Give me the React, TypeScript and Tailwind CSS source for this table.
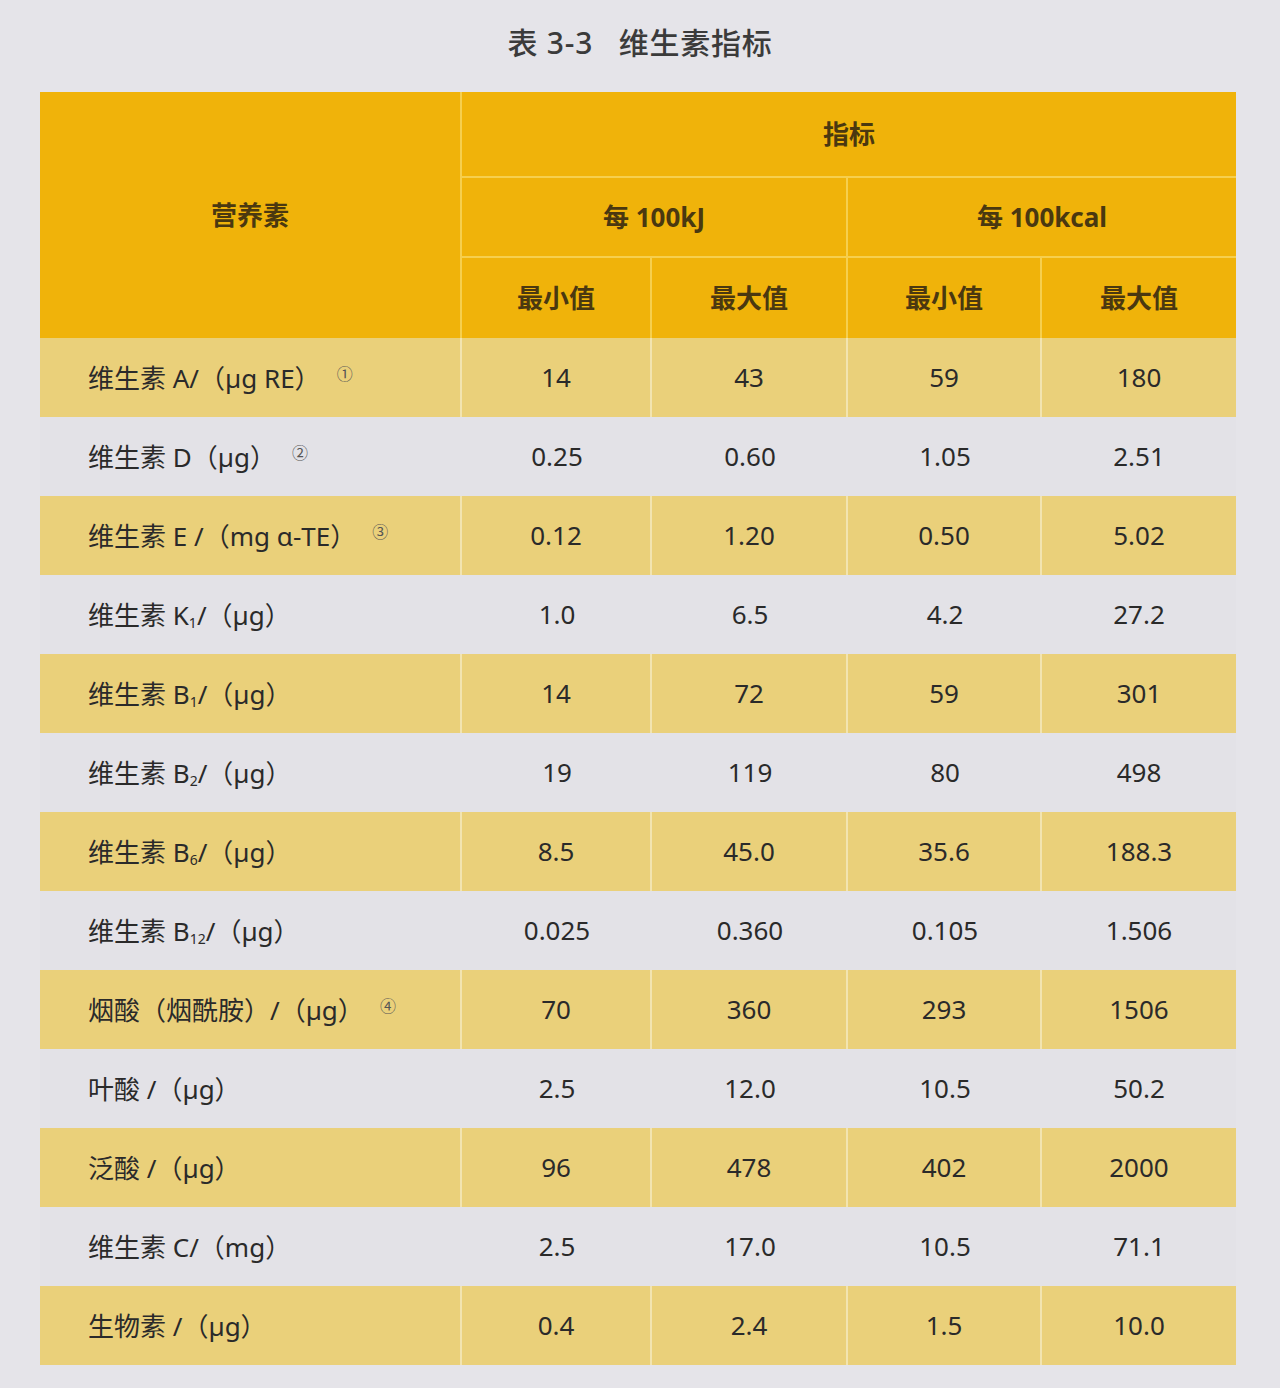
import React from 'react';

interface Row {
  label: React.ReactNode;
  values: string[];
}

const font = { fontFamily: '"Noto Sans", "Noto Sans CJK SC", sans-serif' };

const Note = ({ n }: { n: string }) => (
  <span className="ml-4 relative -top-2 text-[16px] text-[#555]">{n}</span>
);

const rows: Row[] = [
  { label: <>维生素 A/（µg RE）<Note n="①" /></>, values: ['14', '43', '59', '180'] },
  { label: <>维生素 D（µg）<Note n="②" /></>, values: ['0.25', '0.60', '1.05', '2.51'] },
  { label: <>维生素 E /（mg α-TE）<Note n="③" /></>, values: ['0.12', '1.20', '0.50', '5.02'] },
  { label: <>维生素 K<sub className="text-[14px]">1</sub>/（µg）</>, values: ['1.0', '6.5', '4.2', '27.2'] },
  { label: <>维生素 B<sub className="text-[14px]">1</sub>/（µg）</>, values: ['14', '72', '59', '301'] },
  { label: <>维生素 B<sub className="text-[14px]">2</sub>/（µg）</>, values: ['19', '119', '80', '498'] },
  { label: <>维生素 B<sub className="text-[14px]">6</sub>/（µg）</>, values: ['8.5', '45.0', '35.6', '188.3'] },
  { label: <>维生素 B<sub className="text-[14px]">12</sub>/（µg）</>, values: ['0.025', '0.360', '0.105', '1.506'] },
  { label: <>烟酸（烟酰胺）/（µg）<Note n="④" /></>, values: ['70', '360', '293', '1506'] },
  { label: <>叶酸 /（µg）</>, values: ['2.5', '12.0', '10.5', '50.2'] },
  { label: <>泛酸 /（µg）</>, values: ['96', '478', '402', '2000'] },
  { label: <>维生素 C/（mg）</>, values: ['2.5', '17.0', '10.5', '71.1'] },
  { label: <>生物素 /（µg）</>, values: ['0.4', '2.4', '1.5', '10.0'] },
];

const cols = 'grid-cols-[422px_190px_196px_194px_194px]';

export default function App() {
  return (
    <div className="w-[1280px] h-[1388px] bg-[#e5e4e9] text-[#2a2a2a] overflow-hidden" style={font}>
      <div className="h-[92px] flex items-center justify-center pb-2">
        <h1 className="text-[30px] font-medium text-[#3b3b3b] tracking-wide">表 3-3&nbsp;&nbsp;&nbsp;维生素指标</h1>
      </div>

      <div className="ml-[40px] w-[1196px]">
        {/* header */}
        <div className={`grid ${cols} bg-[#f0b30a] text-[26px] font-bold text-[#4a3810]`}>
          <div className="row-span-3 flex items-center justify-center border-r-2 border-[#f6cf4e]">营养素</div>
          <div className="col-span-4 h-[86px] flex items-center justify-center border-b-2 border-[#f6cf4e]">指标</div>
          <div className="col-span-2 h-[80px] flex items-center justify-center border-b-2 border-r-2 border-[#f6cf4e]">每 100kJ</div>
          <div className="col-span-2 h-[80px] flex items-center justify-center border-b-2 border-[#f6cf4e]">每 100kcal</div>
          <div className="h-[80px] flex items-center justify-center border-r-2 border-[#f6cf4e]">最小值</div>
          <div className="h-[80px] flex items-center justify-center border-r-2 border-[#f6cf4e]">最大值</div>
          <div className="h-[80px] flex items-center justify-center border-r-2 border-[#f6cf4e]">最小值</div>
          <div className="h-[80px] flex items-center justify-center">最大值</div>
        </div>

        {/* body */}
        {rows.map((row, i) => {
          const yellow = i % 2 === 0;
          return (
            <div
              key={i}
              className={`grid ${cols} h-[79px] text-[26px] ${yellow ? 'bg-[#ead07a]' : 'bg-[#e3e2e7]'}`}
            >
              <div className={`flex items-center pl-[48px] ${yellow ? 'border-r-2 border-[#f2e4b0]' : ''}`}>
                <span className="leading-none">{row.label}</span>
              </div>
              {row.values.map((v, j) => (
                <div
                  key={j}
                  className={`flex items-center justify-center ${yellow && j < 3 ? 'border-r-2 border-[#f2e4b0]' : ''}`}
                >
                  {v}
                </div>
              ))}
            </div>
          );
        })}
      </div>
    </div>
  );
}
